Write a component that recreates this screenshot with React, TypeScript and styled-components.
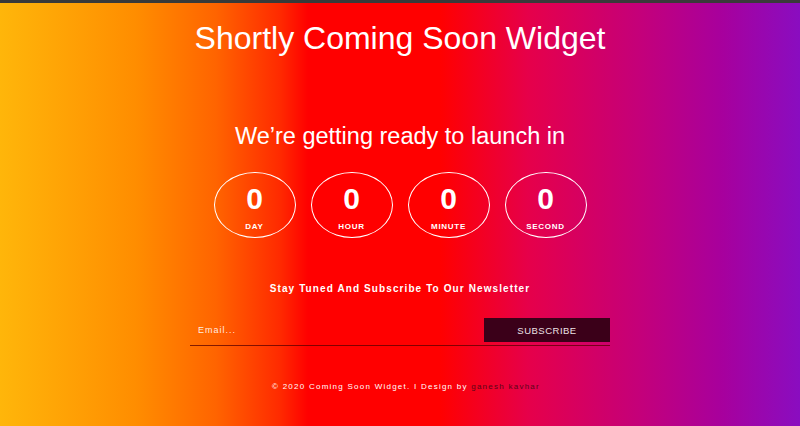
import React from 'react';
import styled, { createGlobalStyle } from 'styled-components';

const GlobalStyle = createGlobalStyle`
  html, body {
    margin: 0;
    padding: 0;
  }
  body {
    font-family: 'Liberation Sans', Arial, sans-serif;
  }
`;

const Page = styled.div`
  min-height: 100vh;
  display: flex;
  flex-direction: column;
  align-items: center;
  color: #fff;
  border-top: 3px solid #3a3a3a;
  box-sizing: border-box;
  background: linear-gradient(
    to right,
    #ffb60a 0%,
    #ff8d00 17%,
    #ff6400 27%,
    #ff2a00 35%,
    #ff0000 38.5%,
    #ff0000 55%,
    #e6004a 66%,
    #c4007a 80%,
    #a8009c 90%,
    #8a0dc0 100%
  );
`;

const Title = styled.h1`
  margin: 17px 0 0;
  font-size: 32px;
  font-weight: 400;
`;

const Subtitle = styled.h2`
  margin: 66px 0 0;
  font-size: 23.5px;
  font-weight: 400;
`;

const Countdown = styled.div`
  display: flex;
  gap: 15px;
  margin-top: 22px;
`;

const Bubble = styled.div`
  width: 82px;
  height: 66px;
  border: 1px solid #fff;
  border-radius: 50%;
  display: flex;
  flex-direction: column;
  align-items: center;
  justify-content: center;
  box-sizing: border-box;
`;

const Digit = styled.span`
  font-size: 30px;
  font-weight: 700;
  line-height: 1;
  margin-top: 4px;
`;

const Unit = styled.span`
  font-size: 8px;
  font-weight: 700;
  letter-spacing: 0.7px;
  margin-top: 8px;
`;

const Newsletter = styled.h3`
  margin: 45px 0 0;
  font-size: 10px;
  font-weight: 700;
  letter-spacing: 1.1px;
`;

const Form = styled.form`
  display: flex;
  align-items: center;
  width: 420px;
  margin-top: 24px;
  padding-bottom: 3px;
  border-bottom: 1px solid rgba(90, 0, 0, 0.75);
`;

const EmailInput = styled.input`
  flex: 1;
  background: transparent;
  border: none;
  outline: none;
  padding: 0 0 0 8px;
  font-family: 'Liberation Sans', Arial, sans-serif;
  font-size: 9px;
  letter-spacing: 1px;
  color: #fff;

  &::placeholder {
    color: rgba(255, 255, 255, 0.9);
  }
`;

const SubscribeButton = styled.button`
  width: 126px;
  height: 24px;
  border: none;
  background: #3b0019;
  color: #ece0e5;
  font-family: 'Liberation Sans', Arial, sans-serif;
  font-size: 9.5px;
  letter-spacing: 0.5px;
  cursor: pointer;
`;

const Footer = styled.p`
  margin: 36px 0 0;
  padding-left: 12px;
  font-size: 8px;
  letter-spacing: 1.25px;
`;

const Author = styled.a`
  color: #5a0618;
  text-decoration: none;
`;

const units = [
  { value: 0, label: 'DAY' },
  { value: 0, label: 'HOUR' },
  { value: 0, label: 'MINUTE' },
  { value: 0, label: 'SECOND' },
];

export default function App() {
  return (
    <Page>
      <GlobalStyle />
      <Title>Shortly Coming Soon Widget</Title>
      <Subtitle>We’re getting ready to launch in</Subtitle>
      <Countdown>
        {units.map((u) => (
          <Bubble key={u.label}>
            <Digit>{u.value}</Digit>
            <Unit>{u.label}</Unit>
          </Bubble>
        ))}
      </Countdown>
      <Newsletter>Stay Tuned And Subscribe To Our Newsletter</Newsletter>
      <Form onSubmit={(e) => e.preventDefault()}>
        <EmailInput type="email" placeholder="Email..." />
        <SubscribeButton type="submit">SUBSCRIBE</SubscribeButton>
      </Form>
      <Footer>
        © 2020 Coming Soon Widget. I Design by <Author href="#">ganesh kavhar</Author>
      </Footer>
    </Page>
  );
}
